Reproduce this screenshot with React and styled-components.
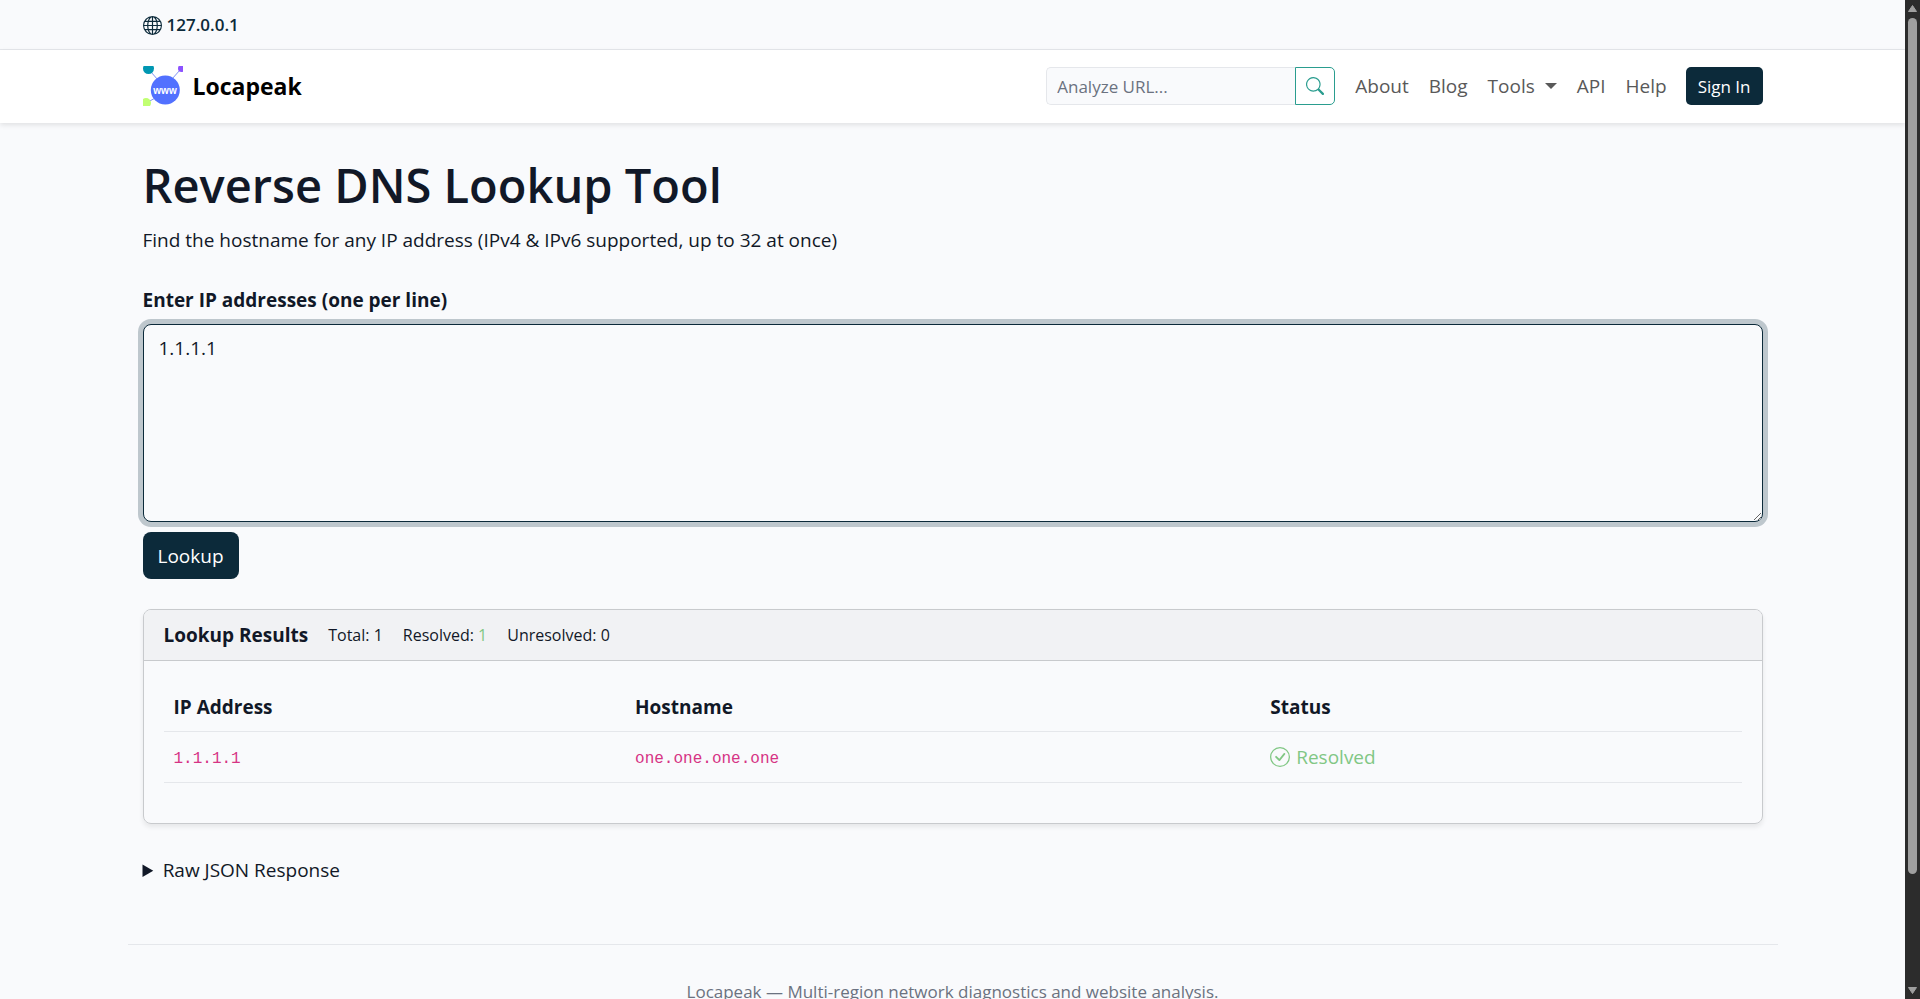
import { useState } from "react";
import styled, { createGlobalStyle } from "styled-components";
import { BsGlobe, BsSearch, BsCheckCircle } from "react-icons/bs";

const GlobalStyle = createGlobalStyle`
  *, *::before, *::after {
    box-sizing: border-box;
  }
  body {
    margin: 0;
    background: #f9fafc;
    color: #111827;
    font-family: "Open Sans", "Noto Sans", sans-serif;
    font-size: 19px;
    line-height: 30px;
  }
  input, textarea, button {
    font-family: inherit;
  }
`;

const results = [{ ip: "1.1.1.1", hostname: "one.one.one.one", resolved: true }];

function Logo() {
  return (
    <svg width="40" height="40" viewBox="0 0 40 40" aria-hidden="true">
      <path d="M8 6l7 8M37 4l-8 9M5 36l9-5" stroke="#7f93f5" fill="none" />
      <circle cx="5.5" cy="2.5" r="5.5" fill="#0097b2" />
      <circle cx="38.5" cy="2.5" r="3.5" fill="#8c52ff" />
      <circle cx="3" cy="37" r="5" fill="#c1ff72" />
      <circle cx="22.3" cy="24" r="14.5" fill="#5271ff" />
      <LogoText x="22" y="28" textAnchor="middle">www</LogoText>
    </svg>
  );
}

function App() {
  const [url, setUrl] = useState("");
  const [addresses, setAddresses] = useState("1.1.1.1");
  const [rawOpen, setRawOpen] = useState(false);
  const resolved = results.filter((r) => r.resolved).length;

  return (
    <Shell>
      <GlobalStyle />
      <Page>
        <TopBar>
          <Container>
            <ClientIp>
              <BsGlobe /> 127.0.0.1
            </ClientIp>
          </Container>
        </TopBar>
        <Header>
          <Navbar>
            <Brand href="/">
              <Logo />
              Locapeak
            </Brand>
            <Search onSubmit={(e) => e.preventDefault()}>
              <SearchInput
                type="text"
                aria-label="Analyze URL"
                placeholder="Analyze URL..."
                value={url}
                onChange={(e) => setUrl(e.target.value)}
              />
              <SearchButton type="submit" aria-label="Search">
                <BsSearch />
              </SearchButton>
            </Search>
            <Nav>
              <NavLink href="/about">About</NavLink>
              <NavLink href="/blog">Blog</NavLink>
              <NavLink href="/tools">
                Tools <Caret />
              </NavLink>
              <NavLink href="/api">API</NavLink>
              <NavLink href="/help">Help</NavLink>
            </Nav>
            <SignIn type="button">Sign In</SignIn>
          </Navbar>
        </Header>
        <Main>
          <Title>Reverse DNS Lookup Tool</Title>
          <Lead>Find the hostname for any IP address (IPv4 &amp; IPv6 supported, up to 32 at once)</Lead>
          <Form onSubmit={(e) => e.preventDefault()}>
            <Label htmlFor="ips">Enter IP addresses (one per line)</Label>
            <TextArea
              id="ips"
              spellCheck={false}
              value={addresses}
              onChange={(e) => setAddresses(e.target.value)}
            />
            <LookupButton type="submit">Lookup</LookupButton>
          </Form>
          <Card>
            <CardHeader>
              <CardTitle>Lookup Results</CardTitle>
              <Stat>Total: {results.length}</Stat>
              <Stat>
                Resolved: <Good>{resolved}</Good>
              </Stat>
              <Stat>Unresolved: {results.length - resolved}</Stat>
            </CardHeader>
            <CardBody>
              <Table>
                <thead>
                  <tr>
                    <Th $width="29.25%">IP Address</Th>
                    <Th $width="40.25%">Hostname</Th>
                    <Th>Status</Th>
                  </tr>
                </thead>
                <tbody>
                  {results.map((row) => (
                    <tr key={row.ip}>
                      <Td><Code>{row.ip}</Code></Td>
                      <Td><Code>{row.hostname}</Code></Td>
                      <Td>
                        <Status>
                          <BsCheckCircle /> Resolved
                        </Status>
                      </Td>
                    </tr>
                  ))}
                </tbody>
              </Table>
            </CardBody>
          </Card>
          <details onToggle={(e) => setRawOpen(e.currentTarget.open)}>
            <Summary>Raw JSON Response</Summary>
            {rawOpen && <pre>{JSON.stringify(results, null, 2)}</pre>}
          </details>
        </Main>
        <Footer>Locapeak — Multi-region network diagnostics and website analysis.</Footer>
      </Page>
      <Scrollbar aria-hidden="true">
        <Arrow viewBox="0 0 9 7"><path d="M4.5 0.5L8.5 6.5H0.5z" /></Arrow>
        <Thumb />
        <Arrow viewBox="0 0 9 7"><path d="M4.5 6.5L8.5 0.5H0.5z" /></Arrow>
      </Scrollbar>
    </Shell>
  );
}

const Shell = styled.div`
  display: grid;
  grid-template-columns: 1fr 15px;
  height: 100vh;
`;
const Page = styled.div`
  overflow-y: auto;
  scrollbar-width: none;
`;
const Scrollbar = styled.div`
  display: flex;
  flex-direction: column;
  align-items: center;
  gap: 6px;
  padding: 5px 0;
  background: #2c2c2c;
`;
const Arrow = styled.svg`
  flex: none;
  width: 9px;
  height: 7px;
  fill: #9f9f9f;
  stroke: #9f9f9f;
  stroke-linejoin: round;
  &:last-child {
    margin-top: auto;
  }
`;
const Thumb = styled.div`
  width: 9px;
  height: 86.6%;
  border-radius: 5px;
  background: #9f9f9f;
`;
const LogoText = styled.text`
  fill: #fff;
  font-family: "Liberation Sans", sans-serif;
  font-size: 10px;
  font-weight: 700;
`;
const Container = styled.div`
  max-width: 1650px;
  margin: 0 auto;
  padding: 0 15px;
`;
const TopBar = styled.div`
  padding: 10px 0 9px;
  border-bottom: 1px solid #e5e7eb;
`;
const ClientIp = styled.div`
  display: flex;
  align-items: center;
  gap: 5px;
  color: #0c2a3a;
  font-size: 17px;
  font-weight: 600;
  svg {
    width: 19px;
    height: 19px;
  }
`;
const Header = styled.header`
  background: #fff;
  box-shadow: 0 2px 5px rgba(0, 0, 0, 0.1);
`;
const Navbar = styled(Container)`
  display: flex;
  align-items: center;
  height: 73px;
  padding-bottom: 1px;
`;
const Brand = styled.a`
  display: flex;
  align-items: center;
  gap: 10px;
  margin-right: auto;
  color: #000;
  font-size: 23px;
  font-weight: 700;
  text-decoration: none;
`;
const Search = styled.form`
  display: flex;
  width: 289px;
  height: 38px;
  margin-right: 20px;
`;
const SearchInput = styled.input`
  flex: 1;
  min-width: 0;
  padding: 0 10px;
  border: 1px solid #e5e7eb;
  border-right: 0;
  border-radius: 5px 0 0 5px;
  background: #f9fafc;
  color: #111827;
  font-size: 17px;
  &::placeholder {
    color: #6b7280;
    opacity: 1;
  }
`;
const SearchButton = styled.button`
  display: flex;
  align-items: center;
  justify-content: center;
  width: 40px;
  padding: 0;
  border: 1px solid #2a9d8f;
  border-radius: 0 5px 5px 0;
  background: #fff;
  color: #2a9d8f;
  cursor: pointer;
  svg {
    width: 18px;
    height: 18px;
  }
`;
const Nav = styled.nav`
  display: flex;
  gap: 20px;
  margin-right: 19px;
`;
const NavLink = styled.a`
  display: flex;
  align-items: center;
  gap: 10px;
  color: #595959;
  text-decoration: none;
`;
const Caret = styled.span`
  border: 6px solid transparent;
  border-top-color: currentColor;
  border-bottom: 0;
`;
const SignIn = styled.button`
  height: 38px;
  padding: 0 12px;
  border: 0;
  border-radius: 5px;
  background: #0c2a3a;
  color: #fff;
  font-size: 17px;
  cursor: pointer;
`;
const Main = styled(Container).attrs({ as: "main" })`
  padding-top: 32px;
  padding-bottom: 59px;
`;
const Title = styled.h1`
  margin: 0 0 10px;
  font-size: 47px;
  font-weight: 600;
  line-height: 60px;
`;
const Lead = styled.p`
  margin: 0 0 30px;
`;
const Form = styled.form`
  display: flex;
  flex-direction: column;
  align-items: flex-start;
  margin-bottom: 30px;
`;
const Label = styled.label`
  margin-bottom: 9px;
  font-weight: 700;
`;
const TextArea = styled.textarea`
  width: 100%;
  height: 198px;
  margin-bottom: 10px;
  padding: 8px 15px;
  border: 1px solid #0c2a3a;
  border-radius: 8px;
  outline: 0;
  background: #f9fafc;
  box-shadow: 0 0 0 5px #bec7cd;
  color: #111827;
  font-size: 19px;
  line-height: 30px;
`;
const LookupButton = styled.button`
  height: 47px;
  padding: 0 15px;
  border: 0;
  border-radius: 8px;
  background: #0c2a3a;
  color: #fff;
  font-size: 19px;
  cursor: pointer;
`;
const Card = styled.section`
  margin-bottom: 31px;
  border: 1px solid #c8cacd;
  border-radius: 8px;
  box-shadow: 0 3px 5px rgba(0, 0, 0, 0.08);
`;
const CardHeader = styled.div`
  display: flex;
  align-items: center;
  gap: 20px;
  padding: 10px 20px;
  border-bottom: 1px solid #c8cacd;
  border-radius: 7px 7px 0 0;
  background: #f1f2f4;
`;
const CardTitle = styled.h2`
  margin: 0;
  font-size: 19px;
  font-weight: 700;
`;
const Stat = styled.span`
  font-size: 16px;
`;
const Good = styled.span`
  color: #81c784;
`;
const CardBody = styled.div`
  padding: 20px 20px 40px;
`;
const Table = styled.table`
  width: 100%;
  border-collapse: collapse;
`;
const Th = styled.th`
  width: ${(props) => props.$width || "auto"};
  padding: 11px 10px 9px;
  border-bottom: 1px solid #e5e7eb;
  text-align: left;
`;
const Td = styled.td`
  padding: 10px;
  border-bottom: 1px solid #e5e7eb;
`;
const Code = styled.code`
  display: block;
  padding-top: 5px;
  color: #d63384;
  font-family: "Liberation Mono", monospace;
  font-size: 16px;
  line-height: 25px;
`;
const Status = styled.span`
  display: flex;
  align-items: center;
  gap: 6px;
  color: #81c784;
  svg {
    width: 20px;
    height: 20px;
  }
`;
const Summary = styled.summary`
  cursor: pointer;
`;
const Footer = styled.footer`
  max-width: 1650px;
  margin: 0 auto;
  padding: 32px 15px;
  border-top: 1px solid #e5e7eb;
  color: #6b7280;
  font-size: 17px;
  text-align: center;
`;

export default App;
